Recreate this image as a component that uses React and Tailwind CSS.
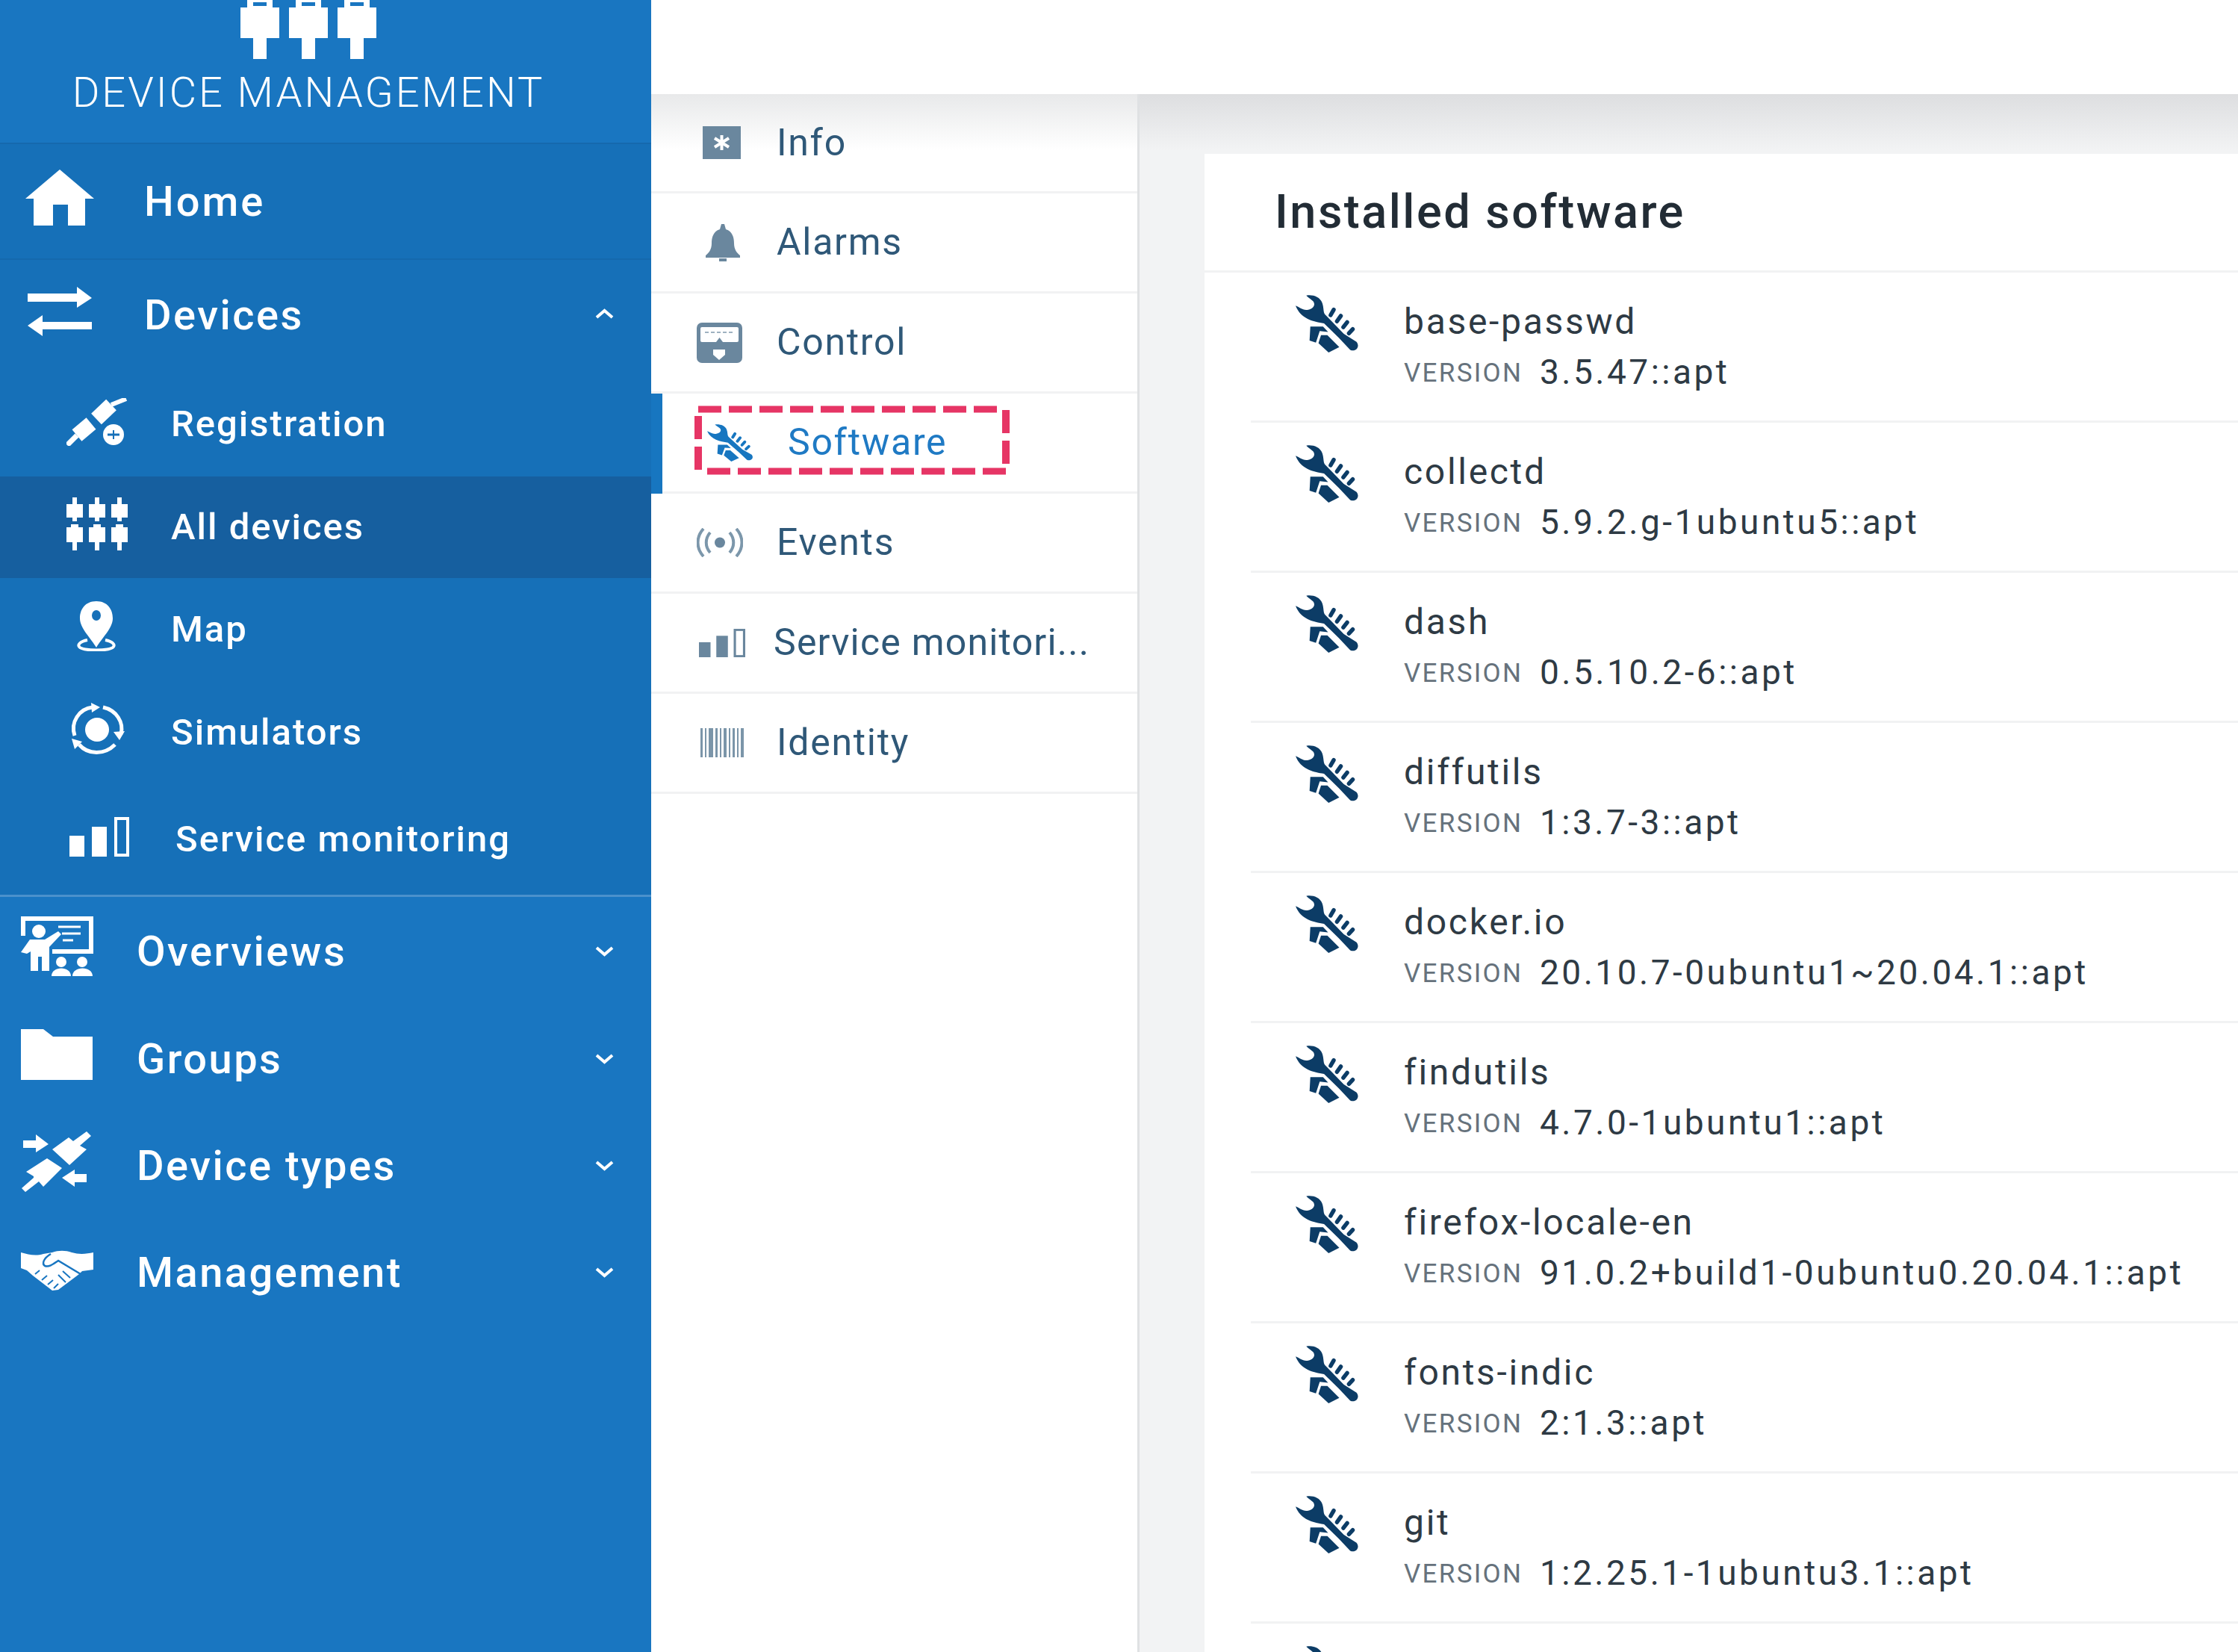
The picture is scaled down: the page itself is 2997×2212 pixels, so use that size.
// iconos dibujados a mano, cada uno con su propia caja
const PLUG = 'M9 0h34v10h9v41H35v28H17V51H0V10h9zM17 3v5h18V3z';

function LogoIcon() {
  return (
    <svg viewBox="0 0 182 79" className="w-[182px] h-[79px] fill-white">
      {[0, 65, 130].map((x) => (
        <path key={x} fillRule="evenodd" transform={`translate(${x} 0)`} d={PLUG} />
      ))}
    </svg>
  );
}

function HomeIcon() {
  return (
    <svg viewBox="0 0 92 75" className="w-[92px] h-[75px] fill-white">
      <path d="M46 0 92 39H80V75H57V47H37V75H11V39H0Z" />
    </svg>
  );
}

function ExchangeIcon() {
  return (
    <svg viewBox="0 0 86 66" className="w-[86px] h-[66px] fill-white">
      <path d="M0 9H66V0L86 15 66 28V20H0Z" />
      <path d="M86 47H20V38L0 52 20 66V57H86Z" />
    </svg>
  );
}

function RegistrationIcon() {
  return (
    <svg viewBox="0 0 82 64" className="w-[82px] h-[64px]">
      <g stroke="#fff" fill="none">
        <path d="M40 28 60 9" strokeWidth="20" />
        <path d="M60 9 80 1" strokeWidth="6" />
        <path d="M14 50 33 34" strokeWidth="20" />
        <path d="M14 50 1 63" strokeWidth="7" />
      </g>
      <path d="M29 22 44 38" stroke="#1670b8" strokeWidth="3" />
      <circle cx="63" cy="47" r="17" fill="#1670b8" />
      <circle cx="63" cy="49" r="14" fill="#fff" />
      <path d="M55 49H71" stroke="#1670b8" strokeWidth="3" />
      <path d="M63 43V55" stroke="#1670b8" strokeWidth="2" />
    </svg>
  );
}

function DevicesGridIcon() {
  return (
    <svg viewBox="0 0 82 71" className="w-[82px] h-[71px] fill-white">
      {[0, 30, 60].map((x) => (
        <g key={x} transform={`translate(${x} 0)`}>
          <rect x="8" y="0" width="6" height="10" />
          <rect x="0" y="9" width="22" height="18" />
          <rect x="8" y="26" width="6" height="6" />
          <rect x="6" y="36" width="10" height="5" />
          <rect x="0" y="40" width="22" height="20" />
          <rect x="8" y="59" width="6" height="12" />
        </g>
      ))}
    </svg>
  );
}

function PinIcon() {
  return (
    <svg viewBox="0 0 52 67" className="w-[52px] h-[67px]">
      <path
        fill="#fff"
        fillRule="evenodd"
        d="M26 0C11 0 4 11 4 23 4 36 19 50 26 62 33 50 48 36 48 23 48 11 41 0 26 0ZM26 12a6 7 0 1 1 0 14 6 7 0 1 1 0-14Z"
      />
      <path d="M14 52C4 54 1 58 3 61 7 67 45 67 49 61 51 58 48 54 38 52" fill="none" stroke="#fff" strokeWidth="4" />
    </svg>
  );
}

function SimulatorsIcon() {
  return (
    <svg viewBox="0 0 76 70" className="w-[76px] h-[70px]">
      <circle cx="38" cy="36" r="16" fill="#fff" />
      <g fill="none" stroke="#fff" strokeWidth="5">
        <path d="M8 44C2 26 14 8 32 6" />
        <path d="M46 6C64 10 74 26 70 42" />
        <path d="M62 56C48 70 26 70 14 56" />
      </g>
      <path d="M30 0 42 6 31 13ZM75 38 68 50 60 39ZM8 62 4 48 18 52Z" fill="#fff" />
    </svg>
  );
}

function BarsIcon({ className, color }) {
  return (
    <svg viewBox="0 0 80 53" preserveAspectRatio="none" className={className}>
      <rect x="0" y="25" width="20" height="28" fill={color} />
      <rect x="30" y="13" width="20" height="40" fill={color} />
      <rect x="62" y="2" width="16" height="49" fill="none" stroke={color} strokeWidth="4" />
    </svg>
  );
}

function OverviewsIcon() {
  return (
    <svg viewBox="0 0 97 80" className="w-[97px] h-[80px]">
      <path d="M0 0H97V50H42V44H91V6H6V26H0Z" fill="#fff" />
      <path d="M50 14H80M55 23H80M56 32H70" stroke="#fff" strokeWidth="3" />
      <circle cx="24" cy="20" r="9" fill="#fff" />
      <path d="M12 31H32L50 20 54 24 38 41V73H28V54H23V73H13V47L8 50 0 48Z" fill="#fff" />
      <circle cx="54" cy="61" r="7" fill="#fff" />
      <circle cx="82" cy="61" r="7" fill="#fff" />
      <path d="M41 80C41 66 67 66 67 80ZM69 80C69 66 96 66 96 80Z" fill="#fff" />
    </svg>
  );
}

function FolderIcon() {
  return (
    <svg viewBox="0 0 96 68" className="w-[96px] h-[68px] fill-white">
      <path d="M0 0H30L43 10H96V68H0Z" />
    </svg>
  );
}

function DeviceTypesIcon() {
  return (
    <svg viewBox="0 0 96 82" className="w-[96px] h-[82px] fill-white">
      <path d="M42 25 64 9 70 14 88 1 94 7 79 20 88 25 65 46Z" />
      <path d="M7 55 35 37 55 50 30 75 24 68 6 82 1 77 17 63 17 61Z" />
      <path d="M3 13H20V5L37 18 20 29V23H3Z" />
      <path d="M88 58H72V52L55 63 72 75V69H88Z" />
    </svg>
  );
}

function HandshakeIcon() {
  return (
    <svg viewBox="0 0 97 54" className="w-[97px] h-[54px]">
      <path
        fill="#fff"
        d="M0 3C10 6 20 8 30 5L42 3C50 0 60 0 68 3 78 6 88 5 97 3V26L82 28 78 32 50 53 42 54 16 34 8 27 0 24Z"
      />
      <g fill="none" stroke="#1976c1">
        <path d="M40 5C30 11 28 18 32 21 38 23 44 18 50 14L80 32" strokeWidth="2.5" />
        <path d="M19 32 25 27M28 40 35 34M36 46 43 40M44 51 50 45" strokeWidth="2" />
        <path d="M56 28 66 37M50 33 60 43" strokeWidth="2" />
      </g>
    </svg>
  );
}

function ToolIcon({ className, color }) {
  return (
    <svg viewBox="0 0 250 215" preserveAspectRatio="none" className={className} fill={color}>
      <path d="M42 2C65-2 95 5 105 30 112 50 108 60 115 72L190 145 240 175C256 195 235 215 215 205L170 160 112 106C70 100 20 90 0 40 15 45 30 60 50 55 75 50 80 30 65 20 55 12 48 8 42 2Z" />
      <path d="M150 55 138 75M178 78 163 98M203 102 188 120M225 128 210 143" stroke={color} strokeWidth="16" strokeLinecap="round" fill="none" />
      <path d="M58 118 108 118 128 138 95 135 80 178 55 170Z" />
      <path d="M100 150H125L172 195 130 215 90 180Z" />
    </svg>
  );
}

function InfoIcon() {
  return (
    <svg viewBox="0 0 51 44" className="w-[51px] h-[44px]">
      <rect width="51" height="44" fill="#6a879e" />
      <path d="M25.5 12V32M16 16 35 28M35 16 16 28" stroke="#fff" strokeWidth="4" />
    </svg>
  );
}

function BellIcon() {
  return (
    <svg viewBox="0 0 46 50" className="w-[46px] h-[50px] fill-[#6a879e]">
      <path d="M21 0H25L27 7C36 10 38 18 38 26 38 34 42 39 46 42V45H0V42C4 39 8 34 8 26 8 18 10 10 19 7Z" />
      <rect x="18" y="46" width="10" height="4" />
    </svg>
  );
}

function ControlIcon() {
  return (
    <svg viewBox="0 0 61 54" className="w-[61px] h-[54px]">
      <rect width="61" height="54" rx="7" fill="#6a879e" />
      <rect x="5" y="6" width="51" height="20" rx="2" fill="#fff" />
      <path d="M11 13H50" stroke="#9fb2c1" strokeWidth="2" strokeDasharray="5 3" />
      <path d="M26 26 30.5 20 35 26Z" fill="#6a879e" />
      <path d="M22 36H38V43L30 50 22 43Z" fill="#fff" />
    </svg>
  );
}

function EventsIcon() {
  return (
    <svg viewBox="0 0 62 39" className="w-[62px] h-[39px]">
      <circle cx="31" cy="19.5" r="7" fill="#6a879e" />
      <g fill="none" stroke="#7c97ab" strokeWidth="4">
        <path d="M9 1C-1 12-1 27 9 38M53 1C63 12 63 27 53 38" />
        <path d="M18 6C11 14 11 25 18 33M44 6C51 14 51 25 44 33" />
      </g>
    </svg>
  );
}

function BarcodeIcon() {
  return (
    <svg viewBox="0 0 59 39" className="w-[59px] h-[39px] fill-[#7b95a9]">
      {[
        [0, 3], [6, 2], [11, 6], [20, 3], [26, 2], [31, 4], [38, 2], [43, 3], [49, 2], [54, 4],
      ].map(([x, w]) => (
        <rect key={x} x={x} y="0" width={w} height="39" />
      ))}
    </svg>
  );
}

// marco rojo discontinuo que resalta la entrada Software
function DashedFrame() {
  const dash = { stroke: '#e63565', strokeDasharray: '31 10', fill: 'none' };
  return (
    <svg viewBox="0 0 424 94" className="absolute left-[58px] top-[16px] w-[424px] h-[94px]">
      <path d="M5 5H410" strokeWidth="9" {...dash} />
      <path d="M417 88H14" strokeWidth="9" {...dash} />
      <path d="M5 86V14" strokeWidth="10" {...dash} />
      <path d="M417 6V84" strokeWidth="10" {...dash} />
    </svg>
  );
}

function Chevron({ up }) {
  return (
    <svg viewBox="0 0 25 14" className="w-[25px] h-[14px] fill-none stroke-white stroke-[4]">
      <path d={up ? 'M2 12 12.5 3 23 12' : 'M2 2 12.5 11 23 2'} />
    </svg>
  );
}

const SUB_ITEMS = [
  { label: 'Registration', icon: <RegistrationIcon />, row: 'h-[146px]', gap: 'w-[229px] pl-[89px]', text: 'pt-[6px]' },
  { label: 'All devices', icon: <DevicesGridIcon />, row: 'h-[136px] bg-[#165f9f]', gap: 'w-[229px] pl-[89px] pb-[10px]', text: '' },
  { label: 'Map', icon: <PinIcon />, row: 'h-[138px]', gap: 'w-[229px] pl-[103px] pb-[10px]', text: '' },
  { label: 'Simulators', icon: <SimulatorsIcon />, row: 'h-[136px]', gap: 'w-[229px] pl-[92px] pb-[8px]', text: 'pt-[2px]' },
  { label: 'Service monitoring', icon: <BarsIcon className="w-[80px] h-[53px]" color="#fff" />, row: 'h-[150px]', gap: 'w-[235px] pl-[93px] pb-[6px]', text: 'pt-[2px]' },
];

const GROUP_ITEMS = [
  { label: 'Overviews', icon: <OverviewsIcon />, row: 'h-[146px]', box: 'w-[183px] pl-[28px] pb-[14px]' },
  { label: 'Groups', icon: <FolderIcon />, row: 'h-[142px]', box: 'w-[183px] pl-[28px] pb-[12px]' },
  { label: 'Device types', icon: <DeviceTypesIcon />, row: 'h-[143px]', box: 'w-[183px] pl-[28px] pb-[12px]' },
  { label: 'Management', icon: <HandshakeIcon />, row: 'h-[144px]', box: 'w-[183px] pl-[28px] pb-[6px]' },
];

const TABS = [
  { label: 'Info', icon: <InfoIcon />, row: 'h-[133px]', box: 'w-[168px] pl-[69px]' },
  { label: 'Alarms', icon: <BellIcon />, row: 'h-[134px]', box: 'w-[168px] pl-[73px]' },
  { label: 'Control', icon: <ControlIcon />, row: 'h-[134px]', box: 'w-[168px] pl-[61px]' },
  { label: 'Software', active: true, icon: <ToolIcon className="w-[62px] h-[50px]" color="#1776c0" />, row: 'h-[134px]', box: 'w-[183px] pl-[75px]' },
  { label: 'Events', icon: <EventsIcon />, row: 'h-[134px]', box: 'w-[168px] pl-[61px]' },
  { label: 'Service monitori...', icon: <BarsIcon className="w-[62px] h-[38px]" color="#6a879e" />, row: 'h-[134px]', box: 'w-[164px] pl-[64px]', tight: true },
  { label: 'Identity', icon: <BarcodeIcon />, row: 'h-[134px]', box: 'w-[168px] pl-[66px]' },
];

const SOFTWARE = [
  ['base-passwd', '3.5.47::apt'],
  ['collectd', '5.9.2.g-1ubuntu5::apt'],
  ['dash', '0.5.10.2-6::apt'],
  ['diffutils', '1:3.7-3::apt'],
  ['docker.io', '20.10.7-0ubuntu1~20.04.1::apt'],
  ['findutils', '4.7.0-1ubuntu1::apt'],
  ['firefox-locale-en', '91.0.2+build1-0ubuntu0.20.04.1::apt'],
  ['fonts-indic', '2:1.3::apt'],
  ['git', '1:2.25.1-1ubuntu3.1::apt'],
];

function Sidebar() {
  return (
    <aside className="w-[872px] shrink-0 bg-[#1976c1] text-white">
      <div className="h-[191px] pr-[46px] flex flex-col items-center">
        <LogoIcon />
        <div className="mt-[14px] text-[56px] leading-[62px] font-light tracking-[3px] whitespace-nowrap">DEVICE MANAGEMENT</div>
      </div>

      <div className="bg-[#1670b8]">
        <div className="h-[157px] flex items-center border-t-[2px] border-b-[2px] border-[#1569ad]">
          <div className="w-[193px] pl-[34px] pb-[10px]"><HomeIcon /></div>
          <span className="text-[56px] font-medium tracking-[3px]">Home</span>
        </div>
        <div className="h-[144px] flex items-center pr-[50px]">
          <div className="w-[193px] pl-[37px] pb-[6px]"><ExchangeIcon /></div>
          <span className="flex-1 pt-[3px] text-[56px] font-medium tracking-[2.5px]">Devices</span>
          <Chevron up />
        </div>
        {SUB_ITEMS.map((item) => (
          <div key={item.label} className={`flex items-center ${item.row}`}>
            <div className={item.gap}>{item.icon}</div>
            <span className={`text-[49px] font-medium tracking-[2px] ${item.text}`}>{item.label}</span>
          </div>
        ))}
      </div>

      <div className="border-t-[3px] border-[#4a91cc]">
        {GROUP_ITEMS.map((item) => (
          <div key={item.label} className={`flex items-center pr-[50px] ${item.row}`}>
            <div className={item.box}>{item.icon}</div>
            <span className="flex-1 text-[56px] font-medium tracking-[2.5px]">{item.label}</span>
            <Chevron />
          </div>
        ))}
      </div>
    </aside>
  );
}

function TabList() {
  return (
    <nav className="w-[654px] shrink-0 border-r-[3px] border-[#dfe1e3] bg-[linear-gradient(#e8e9ea,#ffffff_75px)]">
      {TABS.map((tab) => (
        <div key={tab.label} className={`relative flex items-center border-b-[3px] border-[#f1f2f3] ${tab.row}`}>
          {tab.active && <div className="absolute left-0 top-0 bottom-[-3px] w-[15px] bg-[#1776c0]"></div>}
          <div className={tab.box}>{tab.icon}</div>
          <span className={`text-[50px] ${tab.tight ? 'tracking-[1.2px]' : 'tracking-[1.7px]'} ${tab.active ? 'text-[#1f7ac4]' : 'text-[#2f5878]'}`}>{tab.label}</span>
          {tab.active && <DashedFrame />}
        </div>
      ))}
    </nav>
  );
}

function SoftwareRow({ name, version }) {
  return (
    <div className="h-[201px] ml-[62px] flex border-b-[3px] border-[#f1f2f3]">
      <div className="w-[205px] pl-[60px] pt-[30px]">
        <ToolIcon className="w-[85px] h-[77px]" color="#0c3c66" />
      </div>
      <div className="pt-[36px]">
        <div className="text-[48px] leading-[60px] tracking-[2.7px] text-[#2e3a44]">{name}</div>
        <div className="mt-[7px] flex items-center h-[60px]">
          <span className="w-[182px] pt-[4px] text-[35px] tracking-[2.3px] uppercase text-[#66727c]">Version</span>
          <span className="text-[46px] tracking-[3.5px] text-[#2e3a44]">{version}</span>
        </div>
      </div>
    </div>
  );
}

function Content() {
  return (
    <main className="flex-1 min-w-0 pl-[87px] pt-[80px] bg-[linear-gradient(#dddee0,#f2f3f4_75px)]">
      <section className="bg-white h-full">
        <h2 className="h-[159px] pl-[94px] flex items-center border-b-[3px] border-[#f1f2f3] text-[63px] font-medium tracking-[2.5px] text-[#222c35]">
          Installed software
        </h2>
        {SOFTWARE.map(([name, version]) => (
          <SoftwareRow key={name} name={name} version={version} />
        ))}
        <div className="ml-[122px] pt-[30px]">
          <ToolIcon className="w-[85px] h-[77px]" color="#0c3c66" />
        </div>
      </section>
    </main>
  );
}

export default function App() {
  return (
    <div className="w-[2997px] h-[2212px] overflow-hidden flex font-[Roboto,sans-serif] bg-white">
      <Sidebar />
      <div className="flex-1 min-w-0 flex flex-col">
        <header className="h-[126px] shrink-0 bg-white"></header>
        <div className="flex-1 min-h-0 flex">
          <TabList />
          <Content />
        </div>
      </div>
    </div>
  );
}
